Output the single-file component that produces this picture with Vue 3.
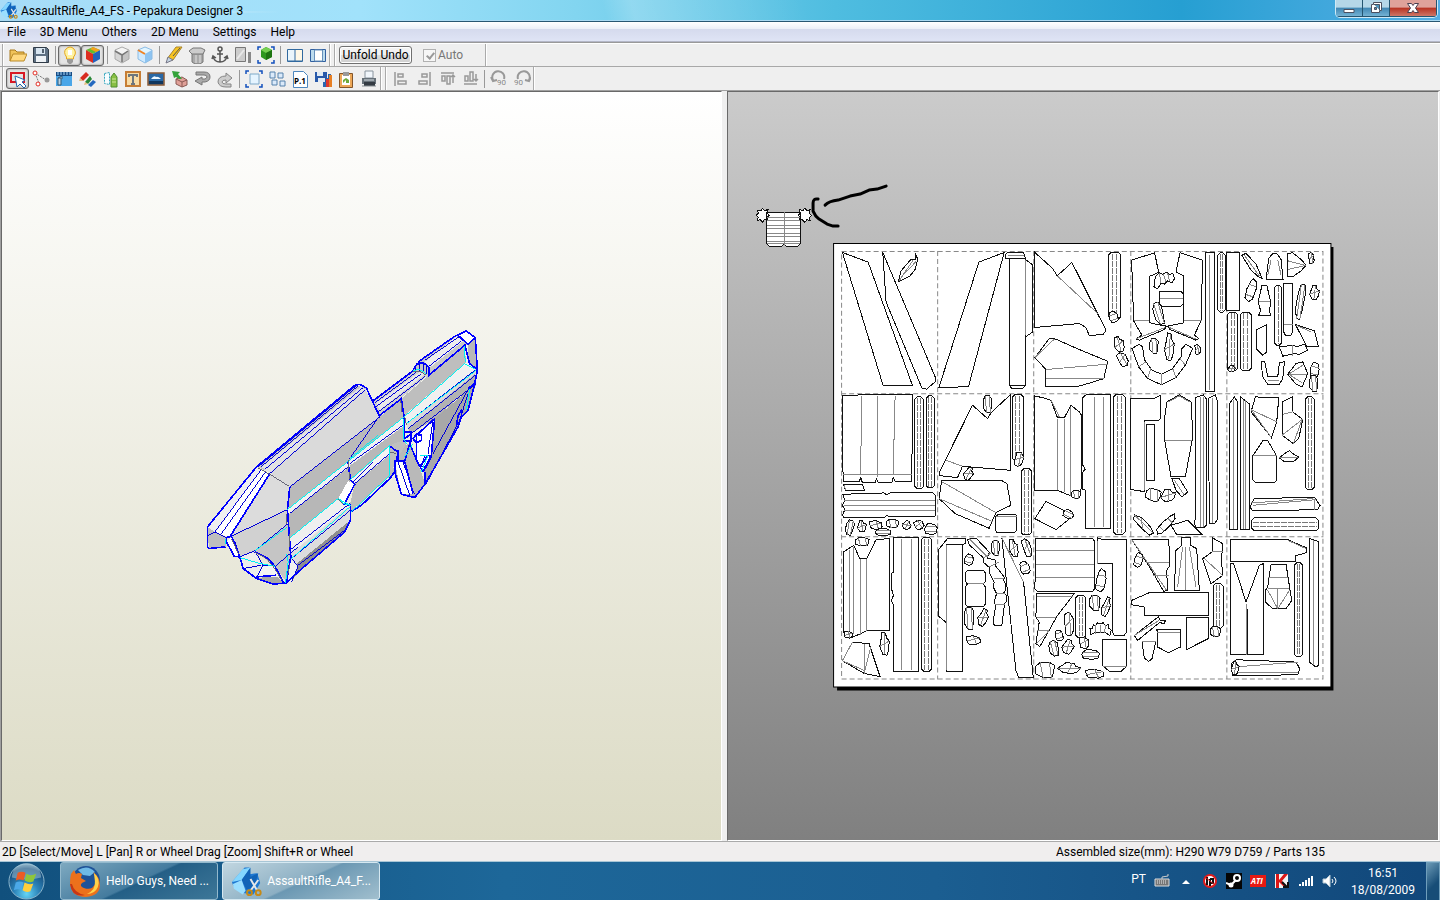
<template>
  <div class="desktop">
    <header class="titlebar">
      <svg class="app-icon" viewBox="0 0 32 32" v-html="pepakura"></svg>
      <h1>AssaultRifle_A4_FS - Pepakura Designer 3</h1>
      <div class="window-buttons">
        <button type="button" aria-label="Minimize">
          <svg viewBox="0 0 14 14"><path d="M2 8.500h10v3H2z" fill="#fff" stroke="#4b5060" /></svg>
        </button>
        <button type="button" aria-label="Restore">
          <svg viewBox="0 0 14 14">
            <path d="M4.500 1.500h8v8h-2v2h-8v-8h2z" fill="#fff" stroke="#4b5060" />
            <path d="M5.500 6.500h2v2h-2zM5 3.500h5.500V9" fill="#4c91b8" stroke="#4b5060" />
          </svg>
        </button>
        <button type="button" class="close" aria-label="Close">
          <svg viewBox="0 0 14 14">
            <path d="M1.500 2.500h4L7 4.500l1.500-2h4L9.500 7l3 4.500h-4L7 9.500l-1.500 2h-4L4.500 7z" fill="#fff" stroke="#4b4050" />
          </svg>
        </button>
      </div>
    </header>

    <nav class="menubar">
      <button v-for="item in menus" :key="item" type="button">{{ item }}</button>
    </nav>

    <div class="toolbars">
      <div v-for="(row, r) in toolbars" :key="r" class="toolbar-row">
        <div v-for="(band, b) in row" :key="b" class="band">
          <template v-for="(tool, i) in band" :key="i">
            <span v-if="tool === '|'" class="separator"></span>
            <button
              v-else
              type="button"
              class="tool"
              :class="{ pressed: pressed.includes(tool) }"
              :aria-label="tool"
            >
              <svg viewBox="0 0 18 18" v-html="icons[tool]"></svg>
            </button>
          </template>
        </div>
        <div v-if="r === 0" class="band unfold-band">
          <button type="button" class="unfold">Unfold Undo</button>
          <label class="auto"><input type="checkbox" checked disabled />Auto</label>
        </div>
      </div>
    </div>

    <main class="workspace">
      <section class="pane pane-3d">
        <svg viewBox="2 92 720 747">
          <g class="model" transform="translate(195 320) scale(.333333)">
            <polygon v-for="(f, i) in faces" :key="i" :points="f[1]" :fill="f[0]" />
            <path class="edge" :d="edges" />
            <path class="edge heavy" :d="heavyEdges" />
            <path class="edge cyan" :d="openEdges" />
            <path class="edge seam" :d="seams" />
          </g>
        </svg>
      </section>
      <section class="pane pane-2d">
        <svg viewBox="729 92 709 747">
          <path d="M838 247h496v443H838z" fill="#000" />
          <path d="M834.500 243.500h497v443h-497z" fill="#fff" stroke="#000" />
          <path class="guides" d="M842.500 251.500h481v427h-481zM938.500 251v428M1034.500 251v428M1131.500 251v428M1227.500 251v428M842 393.500h482M842 536.500h482" />
          <g
            v-for="(g, i) in sheet"
            :key="i"
            class="parts"
            :transform="`translate(${g.x} ${g.y}) scale(.333333)`"
          >
            <path class="cut" :d="g.cuts" />
            <path class="fold" :d="g.folds" />
            <g v-for="(s, j) in g.strips" :key="'s' + j">
              <path class="cut" :d="stripOutline(s)" />
              <path class="fold dashed" :d="stripFolds(s)" />
            </g>
            <g
              v-for="(p, j) in g.bits"
              :key="'b' + j"
              :transform="`translate(${p[0]} ${p[1]}) rotate(${p[4] || 0})`"
            >
              <path class="cut" :d="bitOutline(p, j)" />
              <path class="fold" :d="bitFolds(p, j)" />
            </g>
          </g>
          <path class="arrow" d="M826 205q4-4 13-5l12-4 10-2 9-4 8-1 9-3M819 199q-5-1-5 4v8q2 5 6 8l8 5 6 2h5" />
        </svg>
      </section>
    </main>

    <footer class="statusbar">
      <span>2D [Select/Move] L [Pan] R or Wheel Drag [Zoom] Shift+R or Wheel</span>
      <span class="size">Assembled size(mm): H290 W79 D759 / Parts 135</span>
    </footer>

    <div class="taskbar">
      <button type="button" class="start" aria-label="Start">
        <svg viewBox="0 0 40 40" v-html="startOrb"></svg>
      </button>
      <button type="button" class="task">
        <svg viewBox="0 0 32 32" v-html="firefox"></svg>
        <span>Hello Guys, Need ...</span>
      </button>
      <button type="button" class="task active">
        <svg viewBox="0 0 32 32" v-html="pepakura"></svg>
        <span>AssaultRifle_A4_F...</span>
      </button>
      <div class="tray">
        <span class="lang">PT</span>
        <svg v-for="(icon, i) in trayIcons" :key="i" viewBox="0 0 16 16" v-html="icon"></svg>
      </div>
      <div class="clock">
        <time>16:51</time>
        <time>18/08/2009</time>
      </div>
      <button type="button" class="show-desktop" aria-label="Show desktop"></button>
    </div>
  </div>
</template>

<script setup>
const menus = ['File', '3D Menu', 'Others', '2D Menu', 'Settings', 'Help']

const toolbars = [
  [['open', 'save', '|', 'light', 'texture', '|', 'edge', 'color edge', '|', 'cutter', 'unfold', 'anchor', 'mirror', 'fit model', '|', 'split', 'single']],
  [
    ['select', 'join', 'flaps', 'pencils', 'edge number', 'text', 'image', 'material', 'undo', 'redo', '|', 'bounds', 'arrange', 'page', 'export', 'clipboard', 'print'],
    ['align left', 'align right', 'align top', 'align bottom', '|', 'rotate left', 'rotate right']
  ]
]
const pressed = ['light', 'texture', 'select']

const boxTop = (a, b, c) =>
  `<path d="M9 1l7 3-7 4-7-4z" fill="${a}"/><path d="M2 4l7 4v9l-7-4z" fill="${b}"/><path d="M16 4L9 8v9l7-4z" fill="${c}"/>`
const corners = '<path d="M1 4V1h3M14 1h3v3M17 14v3h-3M4 17H1v-3" fill="none" stroke="#1350bd" stroke-width="1.500"/>'
const rotateArrow = '<path d="M3 10a6 6 0 1 1 11-1M1 7l2 4 4-1" fill="none" stroke="#999" stroke-width="2"/>'

const icons = {
  open: '<path d="M1 15V4h5l2 2h7v3" fill="#f0c35a" stroke="#a8791b"/><path d="M1 15L4 8h14l-3 7z" fill="#ffd980" stroke="#b98a28"/>',
  save: '<path d="M1.500 1.500h13l2 2v13h-15z" fill="#5d6f82" stroke="#303c48"/><path d="M4 2h9v6H4z" fill="#d8e5f0"/><path d="M4 10h10v6H4z" fill="#edf1f5"/><path d="M10 3h2v4h-2z" fill="#52606f"/>',
  light: '<path d="M5.500 11Q2 6 5 3q4-4 8 0 3 4-.500 8v2h-7z" fill="#fff3a0" stroke="#e5a61f"/><path d="M7 4h4v5H7z" fill="#fff"/><path d="M6 13h6v3l-2 2H8l-2-2z" fill="#9a9a9a"/>',
  texture: boxTop('#62bb32', '#dd2d20', '#2562bd') + '<path d="M9 1l7 3-4 2-6-3z" fill="#f4a11c"/>',
  edge: boxTop('#f4f4f4', '#d6d6d6', '#c4c4c4') + '<path d="M9 1l7 3v9l-7 4-7-4V4z" fill="none" stroke="#aaa"/><path d="M2 5l7 4 6-4M9 9v7" fill="none" stroke="#777" stroke-width="1.500"/>',
  'color edge': boxTop('#e1f5ff', '#cfeaff', '#8dc4f2') + '<path d="M9 1l7 3v9l-7 4-7-4V4z" fill="none" stroke="#8bbce5"/><path d="M2 4l7 4" fill="none" stroke="#ef8324" stroke-width="2"/>',
  cutter: '<path d="M2 13L11 1h6L8 14z" fill="#f7c420" stroke="#a8842d"/><path d="M8 10L15 2" stroke="#555"/><path d="M1 17l2-6 5 3z" fill="#c4d4e2" stroke="#778"/>',
  unfold: '<path d="M4 5h11v11l-3 2H7l-3-2z" fill="#aaa" stroke="#777"/><path d="M5 2h8l4 2-2 4H4L1 5z" fill="#ccc" stroke="#777"/><path d="M8 9v8M12 9v8" stroke="#e2e2e2"/>',
  anchor: '<circle cx="9" cy="3" r="2" fill="none" stroke="#555" stroke-width="1.500"/><path d="M9 5v11M6 8h6M2 10q1 6 7 6t7-6M1 13l1-3 3 2M17 13l-1-3-3 2" fill="none" stroke="#555" stroke-width="1.500"/>',
  mirror: '<path d="M1.500 1.500h10v14h-10z" fill="#ccc" stroke="#777"/><path d="M14 6h3v11h-3z" fill="#888"/><path d="M3 13l7-9" stroke="#e8e8e8" stroke-width="2"/>',
  'fit model': corners + '<path d="M9 1l6 3v7l-6 3-5-3V4z" fill="#2d981e"/><path d="M9 1l6 3-6 3-5-3z" fill="#75cf51"/><path d="M9 7v7l6-3V4z" fill="#1d7411"/>',
  split: '<path d="M1.500 3.500h15v12h-15z" fill="#eaf5fb" stroke="#31699f"/><path d="M9 4h7v11H9z" fill="#fff8e6"/><path d="M9 4v11M2 15h14" stroke="#31699f"/>',
  single: '<path d="M1.500 3.500h15v12h-15z" fill="#bcdbed" stroke="#315f9f"/><path d="M5.500 4h8v11h-8z" fill="#fff" stroke="#6791bb"/>',
  select: '<path d="M2 3h13v9H2z" fill="none" stroke="#d81825" stroke-width="2"/><path d="M6 6l10 4-3 2 4 4-2 2-4-4-3 3z" fill="#fff" stroke="#2167b0"/>',
  join: '<path d="M3 3l4 10M3 3l11 7" stroke="#777" stroke-dasharray="2 1"/><circle cx="3" cy="3" r="2" fill="#fff" stroke="#e32d25"/><circle cx="6" cy="14" r="2" fill="#fff" stroke="#e32d25"/><circle cx="15" cy="10" r="2.500" fill="#999"/>',
  flaps: '<path d="M1 3h16v13H1z" fill="#4aa6e8"/><path d="M1 2h16v4H1z" fill="#174c84"/><path d="M3 2v3M6 2v3M9 2v3M12 2v3M15 2v3" stroke="#afd9fa"/><path d="M3 15V8h3v7zM3 8l4-2v3" fill="#b8d1e3" stroke="#315b78"/>',
  pencils: '<path d="M2 8l6-6 3 3-6 6z" fill="#d82b20"/><path d="M7 12l5-6 2 3-4 5z" fill="#288736"/><path d="M10 15l5-5 3 2-5 5z" fill="#2469bf"/><path d="M2 8l-1 3 4 0M7 12l-1 3 4-1" fill="#e7bb7e"/>',
  'edge number': '<path d="M3.500 3.500l5-1v12l-5-1z" fill="#f6fcff" stroke="#35a6bd" stroke-dasharray="2 1"/><path d="M10 7l3-4 3 4v10h-6z" fill="#89bf43" stroke="#4f8d2e"/><path d="M11 9h4M11 12h4" stroke="#cee89b"/>',
  text: '<path d="M2 2h14v14H2z" fill="#f8dca6" stroke="#c67d35" stroke-width="2"/><path d="M5 7V5h8v2M9 5v9M7 14h4" fill="none" stroke="#6e777e" stroke-width="2"/>',
  image: '<path d="M1 3h16v12H1z" fill="#2968a5" stroke="#8a5a35" stroke-width="1.500"/><path d="M4 9q3-4 5-2 2-1 5 2z" fill="#eef8ff"/><path d="M2 11h14v3H2z" fill="#10365e"/>',
  material: '<path d="M6 9l6-2 5 3v5l-5 2-6-3z" fill="#e0a098" stroke="#8a5a54"/><path d="M6 9l6 3 5-2M12 12v5" stroke="#8a5a54" fill="none"/><path d="M9 9L6 7 4 8 2 1l8 1-2 2 4 5z" fill="#35a33b"/>',
  undo: '<path d="M3 2h8q6 0 6 5 0 4-5 5H9v3l-7-4 7-4v2h3q2-1 2-2 0-2-3-2H3z" fill="#aaa" stroke="#777"/>',
  redo: '<path d="M16 8l-6-5v3Q2 6 2 12q1 5 8 5h5v-3h-5q-4 0-4-2 0-2 4-2v3z" fill="#ccc" stroke="#858585"/>',
  bounds: corners + '<path d="M5 4h9v10H5z" fill="#e5f4ff" stroke="#7fa9c8"/>',
  arrange: '<g fill="#dbeafa" stroke="#5682ac"><path d="M2 2h5v6H2zM10 3h5v5h-5zM4 10h5v5H4zM12 11h5v5h-5z"/></g>',
  page: '<path d="M2.500 1.500h10l4 4v12h-14z" fill="#fff" stroke="#4d87be"/><text x="3" y="14" font-family="Open Sans" font-size="8" font-weight="700">P.1</text>',
  export: '<path d="M1 2h12v10H1z" fill="#2859aa"/><path d="M3 2h6v4H3zM4 8h7v4H4z" fill="#e1eaf4"/><path d="M9 12h3V8h2V4h3v13H9z" fill="#2a66b0"/><path d="M12 9h3v8h-3z" fill="#dc382f"/><path d="M15 5h3v12h-3z" fill="#e77f24"/>',
  clipboard: '<path d="M2.500 3.500h13v14h-13z" fill="#eda858" stroke="#83552a"/><path d="M5 5h8v10H5z" fill="#fff"/><path d="M6 2h6v4H6z" fill="#999"/><path d="M6 13v-3l3-2 3 2v3H9v-3z" fill="#70aa3b"/>',
  print: '<path d="M5 8V1h8v7z" fill="#f1f6fb" stroke="#89949e"/><path d="M2 8h14v6H2z" fill="#667078"/><path d="M4 12h11v4H4z" fill="#343b43"/><path d="M4 10h10" stroke="#d8e0e6"/><path d="M2 16h14" stroke="#858d91"/>',
  'align left': '<path d="M3 2v14M6 4h5v3H6zM6 11h8v3H6z" fill="none" stroke="#999" stroke-width="1.500"/>',
  'align right': '<path d="M15 2v14M12 4H7v3h5zM12 11H4v3h8z" fill="none" stroke="#999" stroke-width="1.500"/>',
  'align top': '<path d="M3 3h13M4 6h3v5H4zM9 6h3v8H9zM15 5v8M13 7l2-2 2 2" fill="none" stroke="#999" stroke-width="1.500"/>',
  'align bottom': '<path d="M3 14h13M4 11h3V6H4zM9 11h3V2H9zM15 4v7M13 9l2 2 2-2" fill="none" stroke="#999" stroke-width="1.500"/>',
  'rotate left': rotateArrow + '<text x="7" y="15" font-family="Roboto" font-size="8" fill="#888">90</text>',
  'rotate right': '<g transform="matrix(-1 0 0 1 19 0)">' + rotateArrow + '</g><text x="1" y="15" font-family="Roboto" font-size="8" fill="#888">90</text>'
}

const pepakura = '<path d="M1 17L14 2l5 0v7l8-1 3 10-7 12-12-2-9-8z" fill="#1f78d1"/><path d="M1 17l10-2 9-13-8 2z" fill="#83d6ff"/><path d="M11 15L20 2l0 10 8-4-4 14-8 3z" fill="#1163b7"/><path d="M2 19l9-4 4 11-3 4-9-6z" fill="#9adeff"/><path d="M20 14l7 12M28 15l-8 11" stroke="#e5e7e9" stroke-width="2" fill="none"/><g fill="none" stroke="#c58a18" stroke-width="2"><circle cx="19" cy="28" r="2.500"/><circle cx="28" cy="28" r="2.500"/></g>'

const firefox = '<circle cx="17" cy="15" r="14" fill="#1e5298"/><path d="M9 5q10-6 17 2l-5 4-7-1z" fill="#6eb9e6"/><path d="M2 9L5 5l2 4q3-2 6 0l-1 4 5 3-4 2q-3 3 2 5 8 3 11-4 2-6-2-12 7 5 7 13 0 11-14 12Q2 32 1 18q0-5 1-9z" fill="#ec711c"/><path d="M25 8q7 6 4 14-3 7-11 7 9-4 8-13z" fill="#ffd24b"/><path d="M3 19q2 9 13 11Q3 33 1 19z" fill="#c63716"/>'

const startOrb = '<defs><radialGradient id="orb" cx=".5" cy=".85" r=".9"><stop offset="0" stop-color="#65d5f5"/><stop offset=".4" stop-color="#2b82b8"/><stop offset=".8" stop-color="#164b7a"/><stop offset="1" stop-color="#92b9cc"/></radialGradient></defs><circle cx="20" cy="20" r="18" fill="url(#orb)" stroke="#8bb5cc"/><path d="M5 16a15 15 0 0 1 30 0q-15 4-30 0z" fill="#b9d4e3" opacity=".45"/><path d="M11 11q4-2 8 0l-2 8q-4-2-8 0z" fill="#ed5b25"/><path d="M20 12q4 3 10 0l-3 8q-4 2-9-1z" fill="#8fc63b"/><path d="M9 21q4-2 8 0l-2 8q-4-2-8 0z" fill="#4ba8e8"/><path d="M18 21q5 3 9 1l-3 8q-4 2-8-1z" fill="#ffce3d"/>'

const trayIcons = [
  '<path d="M1 6h14v7H1z" fill="#777" stroke="#ddd"/><path d="M3 8h10M3 10h10" stroke="#eee" stroke-dasharray="1 1"/><path d="M8 6V4l6-1V1" fill="none" stroke="#ccc"/>',
  '<path d="M4 11l4-4 4 4z" fill="#fff"/>',
  '<circle cx="8" cy="8" r="6" fill="#fff" stroke="#e21b1b" stroke-width="2"/><path d="M5 4v8M8 6v7M8 6h3v4H8" stroke="#111" stroke-width="2" fill="none"/><path d="M3 4l10 8" stroke="#e21b1b"/>',
  '<path d="M0 0h16v16H0z" fill="#050505"/><circle cx="11" cy="5" r="3" fill="none" stroke="#fff" stroke-width="2"/><path d="M0 10l5 2 5-5" stroke="#fff" stroke-width="2" fill="none"/><circle cx="5" cy="12" r="2.500" fill="#fff"/>',
  '<path d="M0 2h16v12H0z" fill="#e71912"/><text x="1" y="11" font-family="Open Sans" font-size="8" font-style="italic" font-weight="700" fill="#fff">ATI</text>',
  '<path d="M1 1h13v14H1z" fill="#f3f3f3"/><path d="M2 1h3v6l5-6h4L8 8l4 5H9L5 9v6H2z" fill="#dd1717"/><path d="M8 9l5 5M14 9v5H9" stroke="#111" stroke-width="2" fill="none"/>',
  '<path d="M2 13v-2M5 13v-4M8 13V7M11 13V5M14 13V3" stroke="#fff" stroke-width="2"/>',
  '<path d="M1 6h3l4-4v12l-4-4H1z" fill="#fff" stroke="#b6c9d5"/><path d="M10 6q2 2 0 4M12 4q4 4 0 8" stroke="#fff" fill="none"/>'
]

// 3D model, painted back to front
const faces = [
  ['#d0d0d0', '535,240 655,150 700,165 555,288'],
  ['#e8e8e8', '545,248 675,155 692,160 555,270'],
  ['#c8c8c8', '655,150 670,125 790,40 815,32 820,70 700,165'],
  ['#ededed', '690,125 785,48 806,62 702,145'],
  ['#ffffff', '790,45 815,32 842,52 820,72'],
  ['#b8b8b8', '820,72 842,52 848,150 822,125'],
  ['#c7c7c7', '185,440 480,195 515,203 225,455'],
  ['#e3e3e3', '200,440 497,200 515,208 225,458'],
  ['#dadada', '225,458 512,208 555,290 285,500'],
  ['#f0f0f0', '38,620 185,440 202,447 60,640'],
  ['#ffffff', '60,640 200,447 225,460 105,650'],
  ['#dcdcdc', '105,650 225,460 285,500 278,568'],
  ['#d1d1d1', '105,650 278,568 283,605 180,692 135,710'],
  ['#c5c5c5', '180,692 280,610 288,710 275,785 240,738'],
  ['#bebebe', '38,620 60,635 95,652 92,680 42,685'],
  ['#ffffff', '95,665 110,650 135,710 118,708'],
  ['#ededed', '135,710 180,695 205,735 185,775 145,745'],
  ['#a6a6a6', '185,775 240,765 270,788 235,792'],
  ['#f3f3f3', '205,735 240,738 255,770 185,772'],
  ['#bababa', '285,500 555,290 620,235 628,290 465,420 278,568'],
  ['#f1f1f1', '278,568 628,290 630,315 465,438 283,580'],
  ['#b7b7b7', '283,582 463,440 465,490 430,535 283,655'],
  ['#efefef', '283,657 430,535 465,555 288,700'],
  ['#dddddd', '288,700 467,555 467,600 300,735 288,735'],
  ['#8e8e8e', '300,735 467,600 450,635 310,755 290,785 275,788'],
  ['#efefef', '288,720 310,735 290,785 272,788'],
  ['#b8b8b8', '467,435 630,315 630,360 585,378 467,480'],
  ['#f4f4f4', '467,480 585,378 585,403 480,490'],
  ['#bcbcbc', '480,490 585,403 600,455 467,575 467,548'],
  ['#ffffff', '430,535 460,482 480,492 450,550'],
  ['#bebebe', '620,235 808,75 815,125 630,285'],
  ['#f0f0f0', '630,285 815,125 845,145 635,312'],
  ['#dadada', '635,312 845,145 842,165 640,330'],
  ['#b2b2b2', '640,325 842,160 842,188 720,295 650,340'],
  ['#a8a8a8', '720,295 845,188 820,270 800,290 790,320 692,490 688,455 712,405'],
  ['#ffffff', '665,345 720,295 710,405 685,455 665,420'],
  ['#b9b9b9', '605,390 645,368 670,430 692,490 660,530 620,522 600,455'],
  ['#ffffff', '600,422 630,425 655,520 620,522'],
  ['#bfbfbf', '585,375 625,360 635,370 605,420 590,455']
]
const edges = 'M190 440L483 197M198 440L490 197M225 460L512 208M210 447L505 202M285 500L555 290M200 447L60 635M212 455L80 640M225 460L105 650 278 568M285 500L278 568M285 580L460 440M283 655L430 535M285 690L465 550M290 715L467 570M180 692L280 610M135 710L180 692 205 735 240 738M205 735L185 775M145 745L200 735M245 735L310 680M290 715L310 738 290 785M310 735L450 630M465 430L628 312M465 480L585 375M480 490L590 395M475 485L535 425M465 415L545 300M535 240L655 150M540 248L665 155M545 258L680 160M550 275L692 168M670 125L780 48M690 120L792 50M700 140L800 62M628 290L810 130M635 310L840 150M640 325L842 165M650 340L845 190M720 295L710 405 685 455M715 300L700 400M695 490L795 300 820 220M610 425L645 525M625 425L658 520M40 645L60 635 95 652M120 665L135 710M690 405L680 440 700 435M715 400L822 205M665 128L662 150M675 125V152M685 128V155M695 135V160'
const heavyEdges = 'M38 620L185 440 480 195 495 192 515 203 555 290M225 460L105 650M285 500L278 568 288 710 275 785M535 242L655 152M555 285L620 235 628 290 630 355 650 340M38 620V680L42 685 92 680M95 652L110 648 135 710 118 708 95 665ZM135 710L145 745 185 775 235 792 275 788 310 755 450 635 467 600V555L445 550M180 695L220 715 240 738 265 785M185 770L245 765M460 425L467 480 480 492 450 550M467 575L500 555 585 475 600 455M600 420V455L620 522 660 532 692 490 690 455M630 425L655 520M600 422H630L645 370 670 430M655 150Q675 110 702 140V165L810 75M670 125L780 48 815 32 842 52 848 150 840 190 820 205M790 45L820 72 842 52M810 70L825 130 845 145M820 205L840 190 820 270 800 290 790 320 692 490M720 295L710 405 685 455M665 345L720 295M585 378L610 395 605 425M650 340L645 370M665 345L665 420 685 455M625 335H650V362H625M655 355L665 342 680 345V360L665 368ZM675 440L700 405 710 410 695 440 680 455M785 320L790 285 800 270V290M610 390V420'
const openEdges = 'M278 568L628 290M283 655L430 535 465 555M278 620L180 692M290 715L465 560M275 700L280 725 272 788M465 415L550 345M465 480L585 375V465L470 575M628 290L810 130 840 145M635 310L845 150M808 78L812 125M815 270L825 205M655 150L675 148 695 160M625 295V350L635 370M630 410L655 370M135 712L195 730 240 738M92 655V670M675 405H700L680 455M430 535L445 550 470 555'
const seams = 'M190 443L225 462 284 499M655 155Q675 148 695 165M460 420V445M463 455V475M276 580V610M284 640V680M430 538L445 550M618 240L622 275M630 290L635 315M110 655L130 700M285 735L278 765M585 395L605 400M182 697L215 715 240 745 260 780'

const chamfer = (x, y, w, h, c) =>
  `M${x + c} ${y}H${x + w - c}L${x + w} ${y + c}V${y + h - c}L${x + w - c} ${y + h}H${x + c}L${x} ${y + h - c}V${y + c}Z`

function stripOutline([x, y, w, h]) {
  return chamfer(x, y, w, h, 7)
}

// fold lines run along the longer side
function stripFolds([x, y, w, h, n = 2]) {
  let d = ''
  for (let i = 1; i <= n; i++) {
    d += h > w
      ? `M${x + (w * i) / (n + 1)} ${y + 4}V${y + h - 4}`
      : `M${x + 4} ${y + (h * i) / (n + 1)}H${x + w - 4}`
  }
  return d
}

// small part outlines on a -1..1 grid
const bitShapes = [
  [[-0.5, -1], [0.4, -1], [0.9, -0.6], [0.8, 0.4], [0.6, 1], [-0.2, 1], [-0.9, 0.5], [-0.9, -0.5]],
  [[-0.3, -1], [0.4, -0.9], [0.5, -0.5], [1, -0.2], [0.7, 0.6], [0.3, 1], [-0.5, 0.9], [-1, 0.2], [-0.6, -0.4]],
  [[-0.8, -0.8], [0.1, -1], [0.9, -0.5], [1, 0.5], [0.5, 1], [-0.5, 0.9], [-0.7, 0.2]],
  [[-0.4, -1], [0.5, -0.8], [0.9, -0.2], [0.8, 0.7], [0.2, 1], [-0.8, 0.8], [-1, 0], [-0.7, -0.7]]
]
const foldShapes = [
  'M-0.5 -1L-0.2 1M0.4 -1L0.6 1',
  'M-1 0.2L1 -0.2M0.2 -0.9L-0.1 0.9',
  'M-0.7 0.2L0.9 -0.5M0.1 -1L0.5 1',
  'M-0.8 -0.4L0.8 -0.4M-0.8 0.5L0.8 0.5'
]

function bitOutline([, , w, h], i) {
  const points = bitShapes[i % 4].map(([x, y]) => `${(x * w) / 2} ${(y * h) / 2}`)
  return `M${points.join('L')}Z`
}

function bitFolds([, , w, h], i) {
  return foldShapes[i % 4].replace(/(-?[\d.]+) (-?[\d.]+)/g, (m, x, y) => `${(x * w) / 2} ${(y * h) / 2}`)
}

const sheet = [
  {
    x: 830,
    y: 240,
    cuts: 'M40 37L117 66 250 436H162ZM161 37L171 186 278 443 292 447 318 425V410ZM525 37L449 66 329 443 418 439ZM208 125L216 92 245 58 258 58 260 43 266 58 258 88 242 108ZM541 56H589V436H541ZM530 55V42L536 37H582L590 56ZM541 436L548 445H580L588 436M589 58L611 75V275L589 290M617 37L670 85 684 107 728 67 830 270 822 283 780 286 770 262 750 250 617 262ZM617 352L660 295H675L750 328 835 363 824 415 760 435 740 439H650V388Z',
    folds: 'M210 122L252 60M222 105L260 65M535 46H585M590 60V285M684 107L805 220M650 388L835 372M650 416L824 415M617 352L675 297',
    strips: [],
    bits: []
  },
  {
    x: 1080,
    y: 240,
    cuts: 'M157 60L226 38 238 97 212 108V248L248 256 262 258 255 268 180 300 170 296 188 285 163 242ZM302 38L370 60 365 242 345 285 358 295 350 300 272 268 265 258 314 248V108L290 96ZM377 37H405V454H377ZM442 37H479V211H442ZM242 154H305L312 162V190L304 198H242ZM158 325L180 312 190 320 195 358 218 390 247 402 280 385 305 350 308 325 320 312 340 325 318 375 290 412 247 434 205 415 178 380ZM487 45L500 40 530 72 548 115 535 108 515 90ZM568 55L580 40H592L605 58 611 118H560ZM623 40L640 38 665 58 680 75 665 92 640 110 625 108ZM548 135H562L574 185 570 215 574 225H538L544 212 536 185ZM613 131H640V275L635 285H618L613 275ZM648 253L705 272 717 320H683ZM530 270L560 255 562 335 550 345 530 325ZM600 320L645 315 650 320 675 312 685 330 660 343 645 340 610 348ZM545 365H556L565 410H595L600 367 615 365 610 415 600 432H565L550 410ZM625 402L650 370 670 365 685 400 668 440 648 430ZM224 140L228 110 240 98 250 102 262 96 272 103 280 100 286 115 278 128 265 122 255 132 245 130 235 146Z',
    folds: 'M163 242H210M315 242H368M170 296L258 262M350 297L270 262M178 380L200 365M205 415L215 385M247 434V402M290 412L280 385M318 375L302 355M242 176H310M495 45L540 108M565 105L575 60M605 105L595 60M625 62L678 76 626 88M540 185H572M613 254H640M650 255L695 275M640 314V347M628 402H683M628 402L670 375M628 402L668 428M565 420H598M391 45V450M240 98L245 128M252 102L260 125M265 98L270 122',
    strips: [[88, 37, 36, 200, 2], [415, 38, 22, 178, 2], [445, 216, 30, 176, 2], [483, 216, 32, 176, 2], [585, 135, 22, 180, 1]],
    bits: [[238, 220, 30, 66, -15], [119, 312, 32, 48, -22], [129, 358, 30, 44, -22], [103, 230, 28, 34, -20], [224, 317, 28, 44, 0], [270, 320, 30, 84, 0], [354, 328, 18, 30, 0], [516, 150, 28, 70, 18], [663, 185, 24, 104, 10], [705, 157, 30, 44, 0], [695, 54, 18, 34, 0], [706, 390, 28, 48, 8], [703, 430, 28, 46, 0], [457, 385, 24, 20, 0]]
  },
  {
    x: 830,
    y: 390,
    cuts: 'M40 17L94 14H250L248 274H198L192 262 188 278H148L142 265 138 278H100L95 262 90 274H42ZM44 283H100L107 302H50ZM331 245L430 45 475 85 487 66 543 14V240L400 228 385 262 330 256ZM337 272H520L533 280 545 345 500 367 480 414 378 370 330 325ZM617 17L650 25 665 30 685 83H705L725 45 750 65 757 75V290L745 325 684 300H617ZM617 385L650 333 733 376 680 418ZM500 378L506 373H560L563 380V420L555 428H503L500 420ZM41 312L165 308 173 314 182 308H312L320 318V375L315 380H182L173 375 165 382H45L40 375 47 358 40 345 47 330Z',
    folds: 'M97 17L95 255M145 17V260M198 17L192 255M42 254H248M350 210L400 228M340 275L500 367M330 325L490 394M684 85V300M705 85V305M725 50V318M45 330H318M45 345H318M45 361H318M500 380H562M665 28L690 80M45 285L50 300',
    strips: [[257, 20, 26, 275, 2], [291, 17, 25, 276, 2], [549, 14, 34, 196, 2], [576, 236, 31, 198, 2]],
    bits: [[62, 412, 26, 44, 15], [98, 408, 28, 34, -10], [138, 404, 42, 26, 0], [163, 425, 50, 22, 0], [190, 400, 42, 24, 0], [233, 404, 28, 26, 20], [268, 404, 30, 28, -20], [306, 416, 40, 34, 0], [475, 42, 28, 50, 0], [418, 250, 28, 40, 20], [568, 207, 28, 42, 20], [718, 372, 34, 26, 25], [740, 313, 30, 24, 0]]
  },
  {
    x: 1080,
    y: 390,
    cuts: 'M11 22L20 14H95V415H20V300L11 298V245L18 237 11 225ZM155 24H225L245 14V85L235 92H196V304L155 298ZM203 103H227V272H203ZM300 14L335 35 338 90V152L318 260H275L257 155V75L263 35ZM278 265H300L325 305 308 320 290 300ZM348 22L372 14 380 25V405L372 413H352L347 405ZM387 25L408 14 413 30V390L405 400H390ZM450 40L465 20 475 35V418H450ZM483 20L509 40V418H483ZM528 20L598 23 592 95 576 142 515 65ZM608 35L640 20V65L670 88 658 145 642 160 608 135V75ZM520 197L545 160 550 152H565L570 160 592 197V270L586 276H528L520 268ZM600 203L615 190 630 181 640 190 658 200 650 208 640 214H615ZM512 350L525 325 705 321 722 345 715 358 520 362ZM275 405L325 390 368 433 293 434Z',
    folds: 'M45 20V410M73 20V410M196 95V300M257 152H337M268 35L300 17 330 35M362 20V410M372 20V410M398 22V398M462 30V415M492 30V415M498 30V415M515 58L592 95M515 58L576 142M610 72L640 65M608 135L668 88 642 160M520 197H592M600 203H655M520 345L710 328M515 338L700 325M705 325V358M285 270L315 315',
    strips: [[102, 14, 36, 418, 2], [678, 20, 26, 278, 2], [517, 383, 200, 38, 2]],
    bits: [[222, 314, 50, 36, 8], [266, 315, 48, 36, -8], [191, 404, 26, 78, -42], [261, 402, 24, 78, 45]]
  },
  {
    x: 830,
    y: 535,
    cuts: 'M43 50L74 30 92 70H113L140 14 182 9V286H113L70 306 43 290ZM40 376L70 320 120 325 153 424 105 414ZM193 7H269V407H193V210L187 195 193 180 187 160V115L193 110ZM328 43L355 10H408V25L400 28V407H352V262L328 242ZM352 28H400M415 105H462L468 112V140L462 146 468 154V207L462 214H415L408 207V154L415 146 408 138V112ZM415 12L440 8 480 50 475 68 500 75 498 90 525 125 524 135 528 145V165L524 172 532 180V198L526 205 518 270H495L492 255 500 210 495 200 502 175 492 155 495 140 480 110 482 98 462 80 463 68 420 28ZM518 8L583 140 612 425H568L560 405ZM620 10H790L796 18V160L790 168H625L617 160ZM806 8L825 14H892V290L885 300H855L850 290V85H806ZM622 175H735L685 240 632 333 620 325 630 260 620 245ZM820 313H893V392L875 408H840L820 390ZM907 12H1018L1022 90 1012 105 1015 165 1003 168 970 110ZM1058 7H1083V30L1102 40 1110 165H1035L1040 45 1058 30ZM1148 7L1180 25V50L1175 60 1180 120 1145 145 1120 70 1148 50ZM907 195L960 172H1138V239H945V215L907 208ZM983 283H1053V335L1018 352 985 335ZM938 317H980L968 370 958 378 945 368ZM1072 245H1136V310L1073 342ZM1202 13H1375L1432 38 1430 52 1397 62V79H1202ZM1202 85H1213L1250 200 1290 90 1302 85V358H1254V225L1250 215V358H1202ZM1325 87H1370L1382 165 1387 195 1370 220H1330L1308 200V165L1315 155ZM785 298L782 280 790 278 792 268 800 270 805 262 813 266 822 262 828 270 838 268 838 278 846 284 842 300 825 290 800 290ZM1440 10L1467 18V390L1460 395 1440 380ZM1205 385L1220 373 1400 380 1411 400 1405 418 1210 421ZM915 300L980 250 987 244 992 254 1008 256 1005 264 990 262 925 315Z',
    folds: 'M74 35V295M93 72V298M113 72V286M60 45V300M105 325V414L125 335M70 320L40 376 105 405M218 10V405M246 10V405M352 28V405M415 145H465M420 10L475 65M462 68L490 50M480 95L510 80M493 130H523M500 175H528M497 207H528M518 8L583 140M620 45H795M620 87H795M620 127H795M622 182H730M622 245H680M622 285H660M622 325L660 285M806 18V85M820 392H893M907 12L1012 165M950 80H1018M970 120H1018M1045 155L1060 35M1070 35V165M1100 155L1080 35M1125 70L1180 120M1148 50H1180M983 290H1053M938 317H980M1375 15L1430 40M1250 205V358M1315 125H1375M1315 160H1380M1345 220L1315 165M1345 220L1380 165M1345 160V220M1453 15V390M1210 395L1405 380M1215 410H1405M1215 375V418M915 300L990 255M800 270V295M815 268V292M830 268L825 292',
    strips: [[276, 7, 32, 400, 2], [740, 180, 30, 127, 2], [1151, 145, 30, 133, 2], [1395, 82, 24, 282, 2]],
    bits: [[99, 20, 46, 24, 0], [166, 325, 30, 70, -5], [56, 298, 28, 20, 0], [420, 73, 28, 34, 15], [499, 38, 26, 46, 0], [553, 38, 28, 54, -15], [592, 37, 26, 56, -15], [587, 97, 30, 40, -20], [420, 248, 32, 66, 0], [462, 246, 30, 54, 15], [430, 314, 48, 26, 0], [816, 135, 30, 70, 10], [797, 202, 34, 46, 0], [831, 214, 24, 60, 15], [718, 266, 30, 72, 0], [690, 300, 24, 34, -15], [674, 339, 30, 46, -10], [716, 334, 36, 44, 10], [763, 322, 32, 34, 0], [785, 357, 56, 30, 0], [648, 404, 62, 46, 0], [720, 398, 70, 32, 5], [793, 415, 62, 26, 0], [928, 74, 26, 44, 15], [1158, 289, 34, 30, 0], [1217, 398, 24, 40, 0]]
  },
  {
    // part lying outside the paper
    x: 740,
    y: 170,
    cuts: 'M83 127H184V221L175 229H143L135 222 127 229H91L83 221ZM52 135L58 130 55 120 66 121 71 115 77 122 87 118 86 130 91 136 84 142 86 151 76 149 70 157 64 149 55 151 58 141ZM178 135L183 130 181 119 192 121 197 115 203 121 213 119 211 130 218 136 211 142 213 151 203 149 197 157 190 149 181 151 183 141Z',
    folds: 'M83 142H184M83 151H184M83 166H184M83 175H184M83 190H184M83 199H184M83 214H184M83 221H184M135 127V225',
    strips: [],
    bits: []
  }
]
</script>

<style>
body {
  margin: 0;
}
</style>

<style scoped>
.desktop {
  min-height: 100vh;
  display: flex;
  flex-direction: column;
  background: #efefef;
  color: #000;
  font: 12px/16px Roboto, "Open Sans", sans-serif;
}
button {
  font: inherit;
  color: inherit;
  padding: 0;
  border: 0;
  background: none;
}
svg {
  display: block;
}
.titlebar {
  box-sizing: border-box;
  height: 22px;
  display: flex;
  align-items: flex-start;
  border-bottom: 1px solid #285672;
  box-shadow: inset 0 -1px #a9d9f2;
  background:
    radial-gradient(ellipse at 130px 12px, rgba(255, 255, 255, 0.6), transparent 160px),
    linear-gradient(75deg, transparent 42%, rgba(255, 255, 255, 0.2) 44%, transparent 56%),
    linear-gradient(90deg, #a7dcf7 0, #a1e2fb 25%, #82d5f0 40%, #4fbde0 58%, #269fd2 82%, #55aee4 100%);
}
.app-icon {
  width: 18px;
  height: 20px;
}
h1 {
  flex: 1;
  margin: 0 0 0 3px;
  font-size: 12px;
  line-height: 22px;
  font-weight: 400;
}
.window-buttons {
  display: flex;
  margin-right: 2px;
  border: 1px solid #cfe9f5;
  border-top: 0;
  border-radius: 0 0 5px 5px;
  overflow: hidden;
}
.window-buttons button {
  width: 27px;
  height: 17px;
  display: grid;
  place-items: center;
  border: 1px solid #245570;
  border-top: 0;
  border-left: 0;
  background: linear-gradient(#b5d7e8 0 45%, #4187b3 50%, #74b2d3);
}
.window-buttons .close {
  width: 47px;
  background: linear-gradient(#dfa29a 0 45%, #b83322 50%, #ce7667);
}
.window-buttons svg {
  width: 14px;
  height: 14px;
}
.menubar {
  box-sizing: border-box;
  height: 20px;
  display: flex;
  background: linear-gradient(#fff 0, #eceff8 35%, #d5daed 36%, #dfe4f5 100%);
  border-bottom: 1px solid #b4b7c7;
}
.menubar button {
  padding: 0 7px;
}
.toolbars {
  border-top: 1px solid #999;
}
.toolbar-row {
  height: 22px;
  display: flex;
  border-top: 1px solid #fff;
}
.toolbar-row + .toolbar-row {
  height: 23px;
  border-top-color: #a8a8a8;
}
.band {
  display: flex;
  align-items: center;
  margin-left: 2px;
  padding-left: 3px;
  border-left: 1px solid #aaa;
  border-right: 1px solid #aaa;
  box-shadow: inset 1px 0 #fff, 1px 0 #fff;
}
.band + .band {
  margin-left: 4px;
}
.tool {
  box-sizing: border-box;
  width: 23px;
  height: 21px;
  display: grid;
  place-items: center;
  border: 1px solid transparent;
  border-radius: 3px;
}
.tool.pressed {
  border-color: #686868;
  background: #e4e4e4;
  box-shadow: inset 0 0 2px #777;
}
.tool svg {
  width: 18px;
  height: 18px;
}
.separator {
  width: 1px;
  height: 18px;
  margin: 0 2px 0 3px;
  background: #999;
}
.unfold-band {
  padding: 0 22px 0 4px;
  gap: 11px;
}
.unfold {
  box-sizing: border-box;
  width: 73px;
  height: 18px;
  white-space: nowrap;
  border: 1px solid #707070;
  border-radius: 3px;
  box-shadow: inset 0 0 0 1px #fff;
  background: linear-gradient(#f2f2f2 50%, #ddd 51%, #cfcfcf);
}
.auto {
  display: flex;
  align-items: center;
  gap: 2px;
  color: #777;
}
.auto input {
  appearance: none;
  box-sizing: border-box;
  width: 13px;
  height: 13px;
  margin: 0;
  border: 1px solid #b1b1b1;
  background: #f6f6f6;
}
.auto input::before {
  content: "";
  display: block;
  width: 3px;
  height: 6px;
  margin: 1px 0 0 4px;
  border: solid #999;
  border-width: 0 2px 2px 0;
  rotate: 40deg;
}
.workspace {
  flex: 1;
  display: flex;
  gap: 5px;
  min-height: 0;
  border-top: 1px solid #a0a0a0;
  border-left: 1px solid #a0a0a0;
}
.pane {
  flex: 721 1 0;
  display: grid;
  border: 1px solid #696969;
  border-bottom-color: #fff;
  border-right-color: #fff;
}
.pane svg {
  width: 100%;
  height: 100%;
}
.pane-3d {
  background: linear-gradient(#fff, #dcdbc5);
}
.pane-2d {
  flex-grow: 711;
  margin-right: 1px;
  background: linear-gradient(#cbcbcb, #808080);
}
.model,
.parts {
  shape-rendering: crispEdges;
}
.edge {
  fill: none;
  stroke: #0000d8;
  stroke-width: 3;
}
.edge.heavy {
  stroke: #00f;
  stroke-width: 5;
}
.edge.cyan {
  stroke: #00f4f4;
}
.edge.seam {
  stroke: #667;
}
.guides {
  fill: none;
  stroke: #888;
  stroke-dasharray: 5 3;
}
.cut {
  fill: #fff;
  stroke: #111;
  stroke-width: 3;
}
.fold {
  fill: none;
  stroke: #888;
  stroke-width: 3;
}
.fold.dashed {
  stroke: #777;
  stroke-dasharray: 18 3;
}
.arrow {
  fill: none;
  stroke: #000;
  stroke-width: 3;
  stroke-linecap: round;
  stroke-linejoin: round;
}
.statusbar {
  box-sizing: border-box;
  height: 20px;
  display: flex;
  justify-content: space-between;
  padding-left: 2px;
  line-height: 20px;
  border-top: 1px solid #aaa;
  background: #f0eeee;
}
.size {
  width: 384px;
}
.taskbar {
  box-sizing: border-box;
  height: 40px;
  display: flex;
  color: #fff;
  border-top: 1px solid #a8c6d6;
  background: linear-gradient(90deg, #11507d 0, #1d6799 35%, #1b5e91 65%, #11477a 100%);
}
.start {
  width: 60px;
  padding-left: 7px;
}
.start svg {
  width: 39px;
  height: 39px;
}
.task {
  box-sizing: border-box;
  width: 158px;
  height: 38px;
  margin-right: 4px;
  padding: 0 8px;
  display: flex;
  align-items: center;
  gap: 5px;
  white-space: nowrap;
  border: 1px solid #93b9cd;
  border-radius: 3px;
  background: linear-gradient(155deg, #7ea9c0 0, #447b9e 50%, #245f86 52%, #3d7798 100%);
}
.task.active {
  border-color: #d5e8f1;
  background: linear-gradient(155deg, #c1d6e0 0, #8cafc3 50%, #6b98b3 52%, #a1bfce 100%);
}
.task svg {
  width: 32px;
  height: 32px;
}
.tray {
  margin-left: auto;
  display: flex;
  align-items: center;
  gap: 8px;
}
.lang {
  padding-bottom: 4px;
}
.tray svg {
  width: 16px;
  height: 16px;
}
.clock {
  width: 86px;
  padding: 3px 0 0 2px;
  display: flex;
  flex-direction: column;
  text-align: center;
  line-height: 17px;
}
.show-desktop {
  width: 14px;
  border: 1px solid #6f9ebb;
  background: linear-gradient(135deg, #6c9ab6, #174d77 60%);
}
</style>
